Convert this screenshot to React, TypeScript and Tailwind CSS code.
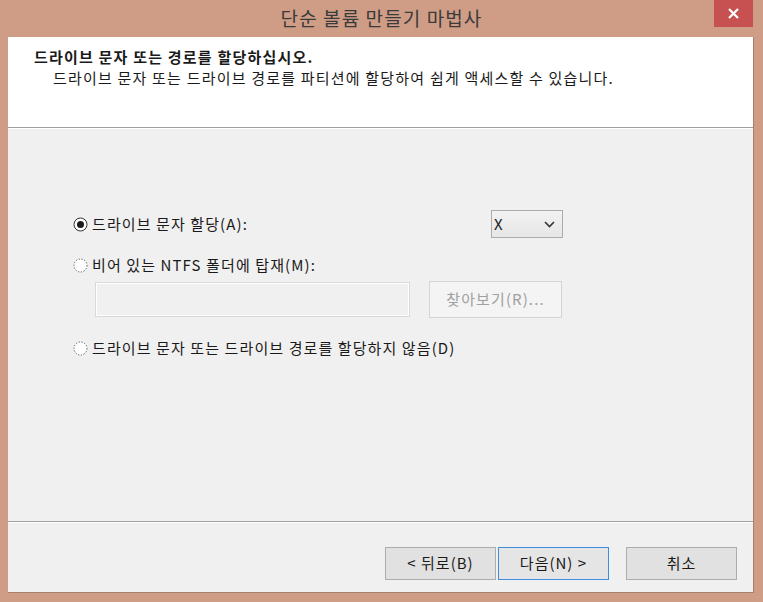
import React from "react";

const font = { fontFamily: '"Noto Sans CJK KR", "Noto Sans", sans-serif' };

function Radio({ checked }: { checked?: boolean }) {
  return (
    <svg width="15" height="15" viewBox="0 0 15 15" className="shrink-0">
      {checked ? (
        <>
          <circle cx="7.5" cy="7.5" r="6.5" fill="#ffffff" stroke="#333333" strokeWidth="1" />
          <circle cx="7.5" cy="7.5" r="3.5" fill="#1a1a1a" />
        </>
      ) : (
        <circle cx="7.5" cy="7.5" r="6.5" fill="#ffffff" stroke="#555555" strokeWidth="1" strokeDasharray="1.2 1.6" />
      )}
    </svg>
  );
}

export default function App() {
  return (
    <div className="w-[763px] h-[602px] bg-[#cf9c86] flex flex-col text-[#1a1a1a] overflow-hidden" style={font}>
      {/* title bar */}
      <div className="h-[37px] flex relative shrink-0">
        <div className="flex-1 flex items-center justify-center text-[19px] tracking-[1.1px] text-[#3a3a3a] pb-[1px]">
          단순 볼륨 만들기 마법사
        </div>
        <div className="absolute right-[10px] top-0 w-[39px] h-[27px] bg-[#c75050] flex items-center justify-center">
          <svg width="11" height="11" viewBox="0 0 11 11">
            <path d="M1 1 L10 10 M10 1 L1 10" stroke="#ffffff" strokeWidth="2.2" />
          </svg>
        </div>
      </div>
      {/* client */}
      <div className="flex-1 flex ml-[8px] mr-[9px] mb-[9px] flex-col bg-[#f0f0f0] border-r border-b border-[#a87e6c]">
        <div className="h-[90px] bg-white pl-[26px] pt-[9px] shrink-0">
          <div className="text-[15px] tracking-[1.2px] font-bold leading-[22px]">드라이브 문자 또는 경로를 할당하십시오.</div>
          <div className="text-[15px] tracking-[1.2px] leading-[20px] pl-[19px]">드라이브 문자 또는 드라이브 경로를 파티션에 할당하여 쉽게 액세스할 수 있습니다.</div>
        </div>
        <div className="h-[1px] bg-[#a0a0a0]" />
        <div className="h-[1px] bg-white" />
        <div className="flex-1 pl-[65px] pt-[81px] text-[15px] tracking-[1.1px]">
          <div className="w-[490px] h-[28px] flex items-center">
            <Radio checked />
            <span className="ml-[4px]">드라이브 문자 할당(A):</span>
            <div className="ml-auto w-[72px] h-[28px] border border-[#acacac] bg-[linear-gradient(#f2f2f2,#e6e6e6)] flex items-center pl-[2px] pr-[7px]">
              <span className="text-[15px]">X</span>
              <svg className="ml-auto" width="11" height="7" viewBox="0 0 11 7">
                <path d="M1 1 L5.5 5.5 L10 1" fill="none" stroke="#333333" strokeWidth="1.6" />
              </svg>
            </div>
          </div>
          <div className="mt-[17px] h-[20px] flex items-center">
            <Radio />
            <span className="ml-[4px]">비어 있는 NTFS 폴더에 탑재(M):</span>
          </div>
          <div className="mt-[6px] flex items-center pl-[22px] w-[489px]">
            <div className="w-[315px] h-[35px] border border-[#d9d9d9] bg-[#f0f0f0] shadow-[inset_0_0_0_1px_#ffffff]" />
            <div className="ml-auto w-[133px] h-[37px] border border-[#d5d5d5] bg-[#f4f4f4] flex items-center justify-center text-[#a0a0a0] text-[15px]">
              찾아보기(R)...
            </div>
          </div>
          <div className="mt-[20px] h-[20px] flex items-center">
            <Radio />
            <span className="ml-[4px]">드라이브 문자 또는 드라이브 경로를 할당하지 않음(D)</span>
          </div>
        </div>
        <div className="h-[1px] bg-[#a0a0a0]" />
        <div className="h-[1px] bg-white" />
        <div className="h-[69px] flex items-start pt-[24px] pl-[377px] text-[15px] tracking-[1px] shrink-0">
          <div className="w-[111px] h-[33px] border border-[#adadad] bg-[#e1e1e1] flex items-center justify-center">&lt; 뒤로(B)</div>
          <div className="ml-[2px] w-[111px] h-[33px] border border-[#3d8fdc] bg-[#e5e5e5] flex items-center justify-center">다음(N) &gt;</div>
          <div className="ml-[17px] w-[111px] h-[33px] border border-[#adadad] bg-[#e1e1e1] flex items-center justify-center">취소</div>
        </div>
      </div>
    </div>
  );
}
